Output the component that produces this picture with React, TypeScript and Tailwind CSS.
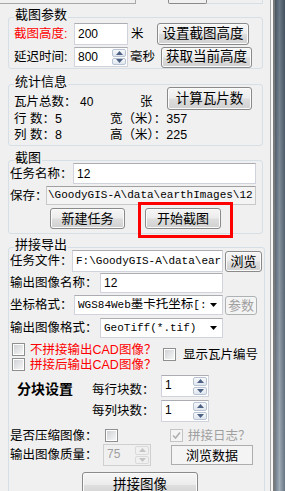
import React from "react";

type P = { className?: string; children?: React.ReactNode };

const mono = "font-['Liberation_Mono','Noto_Sans_CJK_SC',monospace]";

// 三角箭头（微调框、下拉框）
const Tri = ({ up, color }: { up?: boolean; color: string }) => (
  <svg width="7" height="4" viewBox="0 0 7 4">
    <path d={up ? "M0 4L3.5 0L7 4Z" : "M0 0L7 0L3.5 4Z"} fill={color} />
  </svg>
);

const Lbl = ({ className = "", children }: P) => (
  <span className={`shrink-0 whitespace-nowrap leading-[14px] ${className}`}>{children}</span>
);

const Btn = ({ className = "", children, disabled }: P & { disabled?: boolean }) => (
  <button
    className={`flex shrink-0 items-center justify-center whitespace-nowrap rounded-[3px] border leading-none ${
      disabled
        ? "border-[#adb2b5] bg-[#f4f4f4] text-[#a0a0a0]"
        : "border-[#8a8a8a] bg-[image:linear-gradient(#f6f6f6,#ececec_48%,#dedede_52%,#d0d0d0)] text-black shadow-[inset_0_0_0_1px_#fbfbfb]"
    } ${className}`}
  >
    {children}
  </button>
);

const TextBox = ({ className = "", children }: P) => (
  <div
    className={`flex shrink-0 items-center overflow-hidden whitespace-nowrap border border-[#d0d3db] border-t-[#abadb3] bg-white px-[3px] ${className}`}
  >
    {children}
  </div>
);

const Spin = ({ value, className = "", disabled }: { value: string; className?: string; disabled?: boolean }) => (
  <div
    className={`flex shrink-0 border ${
      disabled ? "border-[#cfcfcf] bg-[#f0f0f0] text-[#a0a0a0]" : "border-[#d0d3db] border-t-[#abadb3] bg-white"
    } ${className}`}
  >
    <div className="flex-1 pl-[3px] pt-[2px] text-[12px] leading-[14px]">{value}</div>
    <div className="flex w-[16px] flex-col gap-[1px] p-[1px]">
      <div
        className={`flex flex-1 items-center justify-center rounded-[2px] border ${
          disabled ? "border-[#dadada]" : "border-[#b8c4d3] bg-[image:linear-gradient(#f7f9fb,#dfe6ee)]"
        }`}
      >
        <Tri up color={disabled ? "#c4c4c4" : "#4d6185"} />
      </div>
      <div
        className={`flex flex-1 items-center justify-center rounded-[2px] border ${
          disabled ? "border-[#dadada]" : "border-[#b8c4d3] bg-[image:linear-gradient(#f7f9fb,#dfe6ee)]"
        }`}
      >
        <Tri color={disabled ? "#c4c4c4" : "#4d6185"} />
      </div>
    </div>
  </div>
);

const Combo = ({ className = "", children }: P) => (
  <div
    className={`flex shrink-0 items-center border border-[#d0d3db] border-t-[#abadb3] bg-white pl-[3px] ${className}`}
  >
    <div className={`flex-1 overflow-hidden whitespace-nowrap text-[11px] leading-[14px] ${mono}`}>{children}</div>
    <div className="ml-[4px] mr-[5px]">
      <Tri color="#000" />
    </div>
  </div>
);

const Check = ({ checked, disabled }: { checked?: boolean; disabled?: boolean }) => (
  <div
    className={`h-[13px] w-[13px] shrink-0 border p-[1px] ${
      disabled ? "border-[#c4c4c4] bg-[#f4f4f4]" : "border-[#8e8f8f] bg-white"
    }`}
  >
    {checked ? (
      <svg width="9" height="9" viewBox="0 0 9 9">
        <path d="M1 4.5L3.5 7L8 1.5" stroke="#b0b0b0" strokeWidth="1.6" fill="none" />
      </svg>
    ) : (
      <div className="h-full w-full bg-[image:linear-gradient(135deg,#cfd2d6,#f6f6f6)]" />
    )}
  </div>
);

const Group = ({ title, className = "", children }: P & { title: string }) => (
  <div className={`ml-[8px] shrink-0 rounded-[3px] border border-[#d5dfe5] ${className}`}>
    <div className="-mt-[10px] ml-[5px] w-fit whitespace-nowrap bg-[#f0f0f0] px-[1px] text-[13px] leading-[14px]">
      {title}
    </div>
    {children}
  </div>
);

const App = () => {
  return (
    <div className="flex h-[491px] w-[285px] overflow-hidden whitespace-nowrap bg-[#f0f0f0] font-['Liberation_Sans','Noto_Sans_CJK_SC',sans-serif] text-[12.5px] text-black">
      <div className="flex w-[270px] shrink-0 flex-col">
        {/* 上一块的残边 */}
        <div className="flex h-[4px] shrink-0">
          <div className="w-[136px] border-b border-r border-[#a9a9a9]" />
          <div className="ml-[32px] w-[39px] rounded-b-[2px] border border-t-0 border-[#8a8a8a]" />
          <div className="w-[56px] border-b border-r border-[#d5dfe5]" />
        </div>

        {/* 截图参数 */}
        <Group title="截图参数" className="mt-[13px] w-[255px] pb-[1px]">
          <div className="mt-[1px] flex h-[22px] items-center pl-[5px]">
            <Lbl className="w-[60px] text-[#ff0000]">截图高度:</Lbl>
            <TextBox className="h-[22px] w-[54px] text-[12px]">200</TextBox>
            <Lbl className="ml-[3px] w-[26px]">米</Lbl>
            <Btn className="h-[22px] w-[92px] text-[13.5px]">设置截图高度</Btn>
          </div>
          <div className="mt-[2px] flex h-[20px] items-center pl-[5px]">
            <Lbl className="w-[60px]">延迟时间:</Lbl>
            <Spin value="800" className="h-[20px] w-[54px]" />
            <Lbl className="ml-[2px] w-[31px]">毫秒</Lbl>
            <Btn className="h-[21px] w-[91px] text-[13.5px]">获取当前高度</Btn>
          </div>
        </Group>

        {/* 统计信息 */}
        <Group title="统计信息" className="mt-[15px] w-[255px] pb-[2px]">
          <div className="-mt-[2px] flex h-[23px] items-start pl-[5px]">
            <Lbl className="mt-[8px] w-[66px]">瓦片总数：</Lbl>
            <Lbl className="mt-[8px] w-[60px] text-[12px]">40</Lbl>
            <Lbl className="mt-[8px] w-[27px]">张</Lbl>
            <Btn className="h-[23px] w-[85px] text-[13.5px]">计算瓦片数</Btn>
          </div>
          <div className="mt-[1px] flex h-[16px] items-center pl-[5px]">
            <Lbl className="w-[96px] leading-[16px]">行&nbsp;数：5</Lbl>
            <Lbl className="leading-[16px]">宽（米）：357</Lbl>
          </div>
          <div className="flex h-[16px] items-center pl-[5px]">
            <Lbl className="w-[96px] leading-[16px]">列&nbsp;数：8</Lbl>
            <Lbl className="leading-[16px]">高（米）：225</Lbl>
          </div>
        </Group>

        {/* 截图 */}
        <Group title="截图" className="mt-[14px] w-[255px] pb-[4px]">
          <div className="-mt-[2px] flex h-[21px] items-center pl-[1px]">
            <Lbl className="w-[63px]">任务名称：</Lbl>
            <TextBox className="h-[21px] w-[183px] text-[12px]">12</TextBox>
          </div>
          <div className="mt-[2px] flex h-[19px] items-center pl-[1px]">
            <Lbl className="w-[36px]">保存：</Lbl>
            <div
              className={`flex h-[19px] w-[210px] shrink-0 items-center overflow-hidden whitespace-nowrap border border-[#c8c8c8] border-t-[#a0a0a0] bg-[#f4f4f4] pl-[1px] text-[11px] ${mono}`}
            >
              \GoodyGIS-A\data\earthImages\12
            </div>
          </div>
          <div className="mt-[3px] flex h-[21px] items-center pl-[41px]">
            <Btn className="h-[21px] w-[75px] text-[13px]">新建任务</Btn>
            <div className="relative ml-[20px]">
              <Btn className="h-[21px] w-[76px] text-[13px]">开始截图</Btn>
              <div className="pointer-events-none absolute -bottom-[9px] -left-[7px] -right-[12px] -top-[6px] border-[3px] border-[#ff0000]" />
            </div>
          </div>
        </Group>

        {/* 拼接导出 */}
        <Group title="拼接导出" className="mt-[13px] w-[257px] pb-[10px]">
          <div className="-mt-[2px] flex h-[22px] items-center pl-[1px]">
            <Lbl className="w-[62px]">任务文件：</Lbl>
            <TextBox className={`h-[22px] w-[151px] text-[11px] ${mono}`}>F:\GoodyGIS-A\data\ear</TextBox>
            <Btn className="ml-[2px] h-[21px] w-[37px] self-end text-[13px]">浏览</Btn>
          </div>
          <div className="mt-[1px] flex h-[20px] items-center pl-[1px]">
            <Lbl className="w-[90px]">输出图像名称：</Lbl>
            <TextBox className="h-[20px] w-[123px] text-[12px]">12</TextBox>
          </div>
          <div className="mt-[2px] flex h-[20px] items-center pl-[1px]">
            <Lbl className="w-[64px]">坐标格式：</Lbl>
            <Combo className="h-[20px] w-[149px]">
              WGS84Web<span className="text-[12.5px]">墨卡托坐标</span>[:
            </Combo>
            <Btn disabled className="ml-[2px] h-[19px] w-[32px] self-end text-[13px]">
              参数
            </Btn>
          </div>
          <div className="mt-[3px] flex h-[20px] items-center pl-[1px]">
            <Lbl className="w-[90px]">输出图像格式：</Lbl>
            <Combo className="h-[20px] w-[123px]">GeoTiff(*.tif)</Combo>
          </div>

          {/* 复选项 */}
          <div className="mt-[4px] flex pl-[3px]">
            <div className="flex w-[151px] shrink-0 flex-col">
              <div className="flex h-[15px] items-center">
                <Check />
                <Lbl className="ml-[5px] text-[#ff0000]">不拼接输出CAD图像？</Lbl>
              </div>
              <div className="flex h-[15px] items-center">
                <Check />
                <Lbl className="ml-[5px] text-[#ff0000]">拼接后输出CAD图像？</Lbl>
              </div>
            </div>
            <div className="mt-[5px] flex h-[15px] items-center">
              <Check />
              <Lbl className="ml-[7px]">显示瓦片编号</Lbl>
            </div>
          </div>

          {/* 分块设置 */}
          <div className="mt-[3px] flex h-[22px] items-start">
            <Lbl className="ml-[8px] mt-[7px] w-[75px] text-[14px] font-bold leading-[15px]">分块设置</Lbl>
            <Lbl className="mt-[8px] w-[69px]">每行块数：</Lbl>
            <Spin value="1" className="h-[22px] w-[48px]" />
          </div>
          <div className="mt-[3px] flex h-[22px] items-center pl-[83px]">
            <Lbl className="w-[69px]">每列块数：</Lbl>
            <Spin value="1" className="h-[22px] w-[48px]" />
          </div>

          <div className="mt-[6px] flex h-[15px] items-center pl-[1px]">
            <Lbl className="w-[95px]">是否压缩图像：</Lbl>
            <Check />
            <div className="ml-[52px]">
              <Check checked disabled />
            </div>
            <Lbl className="ml-[5px] text-[#a0a0a0]">拼接日志？</Lbl>
          </div>
          <div className="mt-[1px] flex h-[22px] items-center pl-[1px]">
            <Lbl className="w-[93px]">输出图像质量：</Lbl>
            <Spin disabled value="75" className="h-[22px] w-[48px]" />
            <button className="ml-[20px] flex h-[20px] w-[82px] shrink-0 items-center justify-center border border-[#adadad] bg-[#f4f4f4] text-[13px] leading-none">
              浏览数据
            </button>
          </div>
          <Btn className="ml-[73px] mt-[6px] h-[26px] w-[116px] border-[#3c7fb1] text-[13.5px] shadow-[inset_0_0_0_1px_#a8dcf8]">
            拼接图像
          </Btn>
        </Group>
      </div>

      {/* 右侧窗口边框 */}
      <div className="w-[1px] shrink-0 bg-[#a8a8a8]" />
      <div className="w-[2px] shrink-0 bg-[#f8f8f8]" />
      <div className="w-[2px] shrink-0 bg-[#7a7a7a]" />
      <div className="flex-1 bg-[image:linear-gradient(90deg,#8e9aa6,#d3d9de_45%,#8693a0),linear-gradient(#7e8a96,#c4ccd3)] bg-blend-multiply" />
    </div>
  );
};

export default App;
